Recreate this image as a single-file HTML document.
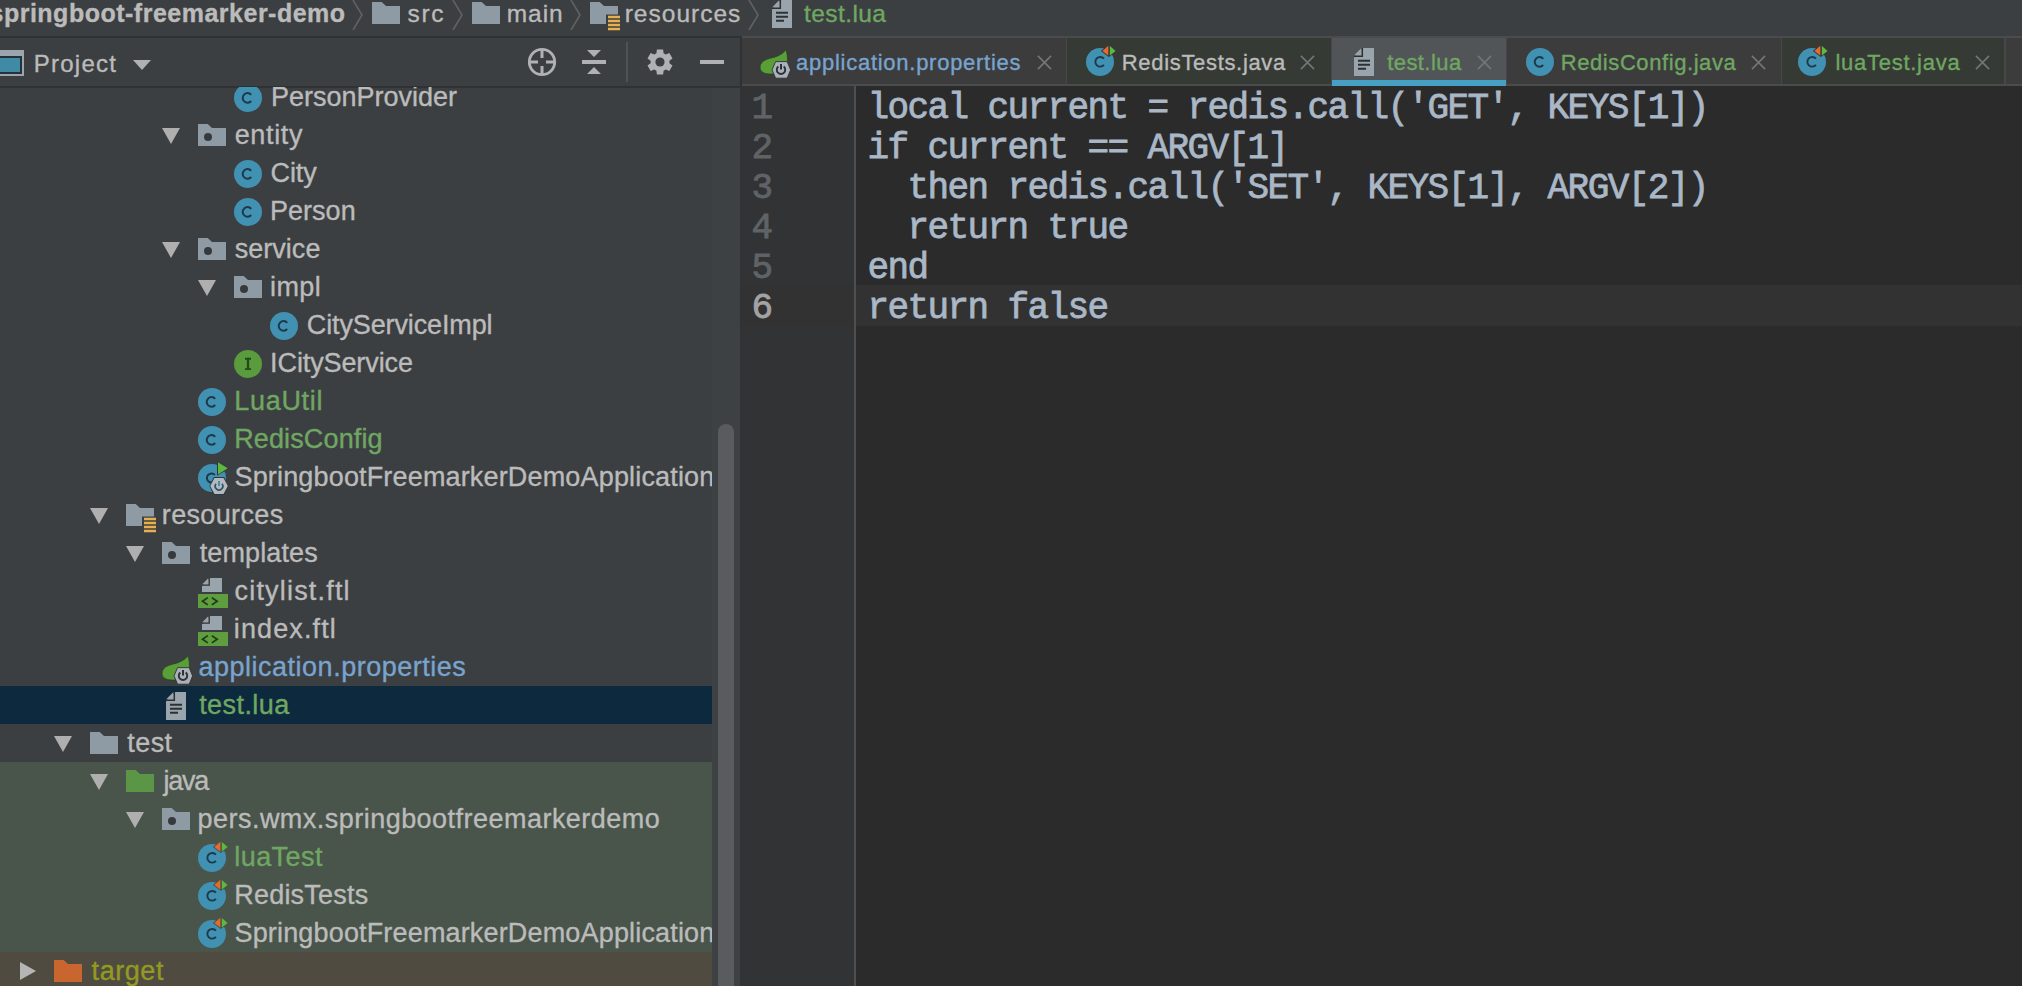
<!DOCTYPE html><html><head><meta charset="utf-8"><style>html,body{margin:0;padding:0;}body{width:2022px;height:986px;overflow:hidden;position:relative;background:#3C3F41;}div{-webkit-text-stroke:0.35px currentColor;}</style></head><body>

<svg width="0" height="0" style="position:absolute">
<defs>
 <symbol id="cls" viewBox="0 0 28 28">
  <circle cx="14" cy="14" r="14" fill="#4191B3"/>
  <path d="M17.18 10.81 A4.8 4.8 0 1 0 17.18 16.99" fill="none" stroke="#1D3A4B" stroke-width="2"/>
 </symbol>
 <symbol id="tcls" viewBox="0 0 31 31">
  <mask id="tmask" maskUnits="userSpaceOnUse" x="0" y="0" width="31" height="31"><rect x="0" y="0" width="31" height="31" fill="#fff"/><path d="M14.8 6 L23.1 -0.9 L23.1 12.2 Z M22.9 -0.8 L31.2 6 L22.9 12 Z" fill="#000"/></mask>
  <circle cx="14" cy="17" r="14" fill="#4191B3" mask="url(#tmask)"/>
  <path d="M17.92 13.68 A4.85 4.85 0 1 0 17.92 19.92" fill="none" stroke="#1D3A4B" stroke-width="1.9"/>
  <path d="M16.4 6 L22.3 0.8 L22.3 10.6 Z" fill="#E8692E"/>
  <path d="M23.9 1 L29.6 6 L23.9 10.4 Z" fill="#5DB83D"/>
 </symbol>
 <symbol id="icls" viewBox="0 0 28 28">
  <circle cx="14" cy="14" r="14" fill="#5A9B3E"/>
  <path d="M11 8.8 H17 M11 19.1 H17" fill="none" stroke="#22491A" stroke-width="1.9"/><path d="M14 8.8 V19.1" stroke="#22491A" stroke-width="2.3"/>
 </symbol>
 <symbol id="pkg" viewBox="0 0 28 22">
  <path d="M0 0 H9.7 L14 4 H28 V22 H0 Z" fill="#8E9BA5"/>
  <circle cx="10" cy="13" r="4" fill="#373A3C"/>
 </symbol>
 <symbol id="fold" viewBox="0 0 28 22">
  <path d="M0 0 H9.7 L14 4 H28 V22 H0 Z" fill="#8E9BA5"/>
 </symbol>
 <symbol id="foldg" viewBox="0 0 28 22">
  <path d="M0 0 H9.7 L14 4 H28 V22 H0 Z" fill="#5A9645"/>
 </symbol>
 <symbol id="foldo" viewBox="0 0 28 22">
  <path d="M0 0 H9.7 L14 4 H28 V22 H0 Z" fill="#C9652E"/>
 </symbol>
 <symbol id="resf" viewBox="0 0 32 30">
  <path d="M0 0 H9.7 L14 4 H28 V22 H0 Z" fill="#8E9BA5"/>
  <rect x="16" y="12.5" width="16" height="17.5" fill="#3C3F41"/>
  <path d="M18 15 H30 M18 19 H30 M18 23 H30 M18 27 H30" stroke="#E6B050" stroke-width="2.3"/>
 </symbol>
 <symbol id="doc" viewBox="0 0 20 28" preserveAspectRatio="none">
  <path d="M9.2 0 H20 V28 H0 V9.2 Z" fill="#9AA4AD"/>
  <path d="M7.4 0 V7.4 H0 Z" fill="#9AA4AD"/>
  <path d="M8.3 0 V8.3 H0" fill="none" stroke="#2E3133" stroke-width="1.5"/>
  <path d="M4 12.7 H16 M4 16.8 H16 M4 20.8 H12" stroke="#2E3133" stroke-width="2"/>
 </symbol>
 <symbol id="ftl" viewBox="0 0 30 31">
  <path d="M12 0 H24 V14 H4 V8 Z" fill="#9AA4AD"/>
  <path d="M10.5 0 V6.5 H4 Z" fill="#9AA4AD"/>
  <path d="M11.2 0 V7.2 H4" fill="none" stroke="#2E3133" stroke-width="1.3"/>
  <rect x="0" y="16" width="30" height="14" fill="#5E9E3E"/>
  <path d="M9.8 19.6 L4.5 23.2 L9.8 26.9 M13.8 19.6 L19.2 23.2 L13.8 26.9" fill="none" stroke="#1F3A14" stroke-width="1.7"/>
 </symbol>
 <symbol id="spring" viewBox="0 0 32 31">
  <path d="M26.8 1.8 C24 6 19 8 15.3 9.3 C10 10.5 5 11.5 2.5 15 C0 18.5 1 23 4 24.5 C7 26 10 26.2 17 26 L28.4 16 C28.6 9 28.2 5 26.8 1.8 Z" fill="#5A9E38" stroke="#24401A" stroke-width="0.7"/>
  <path d="M16.6 13.6 H28.2 L31.6 21.9 L28.2 30.2 H16.6 L13 21.9 Z" fill="#AAB1BA" stroke="#2E3133" stroke-width="0.9"/>
  <path d="M19.3 18.6 A4.2 4.2 0 1 0 24.7 18.6" fill="none" stroke="#2E3133" stroke-width="1.9"/>
  <path d="M22 16 V21.6" stroke="#2E3133" stroke-width="2"/>
 </symbol>
 <symbol id="app" viewBox="0 0 34 34">
  <circle cx="14" cy="16" r="14" fill="#4191B3"/>
  <path d="M16.9 12.9 A4.6 4.6 0 1 0 16.9 19.1" fill="none" stroke="#1D3A4B" stroke-width="2"/>
  <path d="M19 -1 L31.3 6.4 L19 13.8 Z" fill="#2C3A3E"/>
  <path d="M20 0.2 L29.8 6.3 L20 12.4 Z" fill="#5DB83D"/>
  <path d="M15.8 15 H26.2 L30.7 24 L26.2 33 H15.8 L11.3 24 Z" fill="#2C3A3E"/>
  <path d="M16.5 16 H25.5 L29.8 24 L25.5 32 H16.5 L12.2 24 Z" fill="#B4B9BF"/>
  <path d="M18.1 21.75 A3.8 3.8 0 1 0 23.9 21.75" fill="none" stroke="#2D5566" stroke-width="1.7"/>
  <path d="M21 19 V24" stroke="#3F8BA6" stroke-width="1.8"/>
 </symbol>
 <symbol id="xclose" viewBox="0 0 16 16">
  <path d="M1 1 L15 15 M15 1 L1 15" stroke="#737577" stroke-width="1.7"/>
 </symbol>
</defs>
</svg>

<div style="position:absolute;left:0px;top:0px;width:2022px;height:36px;background:#3C3F41;"></div>
<div style="position:absolute;left:0px;top:36px;width:742px;height:2px;background:#2F3133;"></div>
<div style="position:absolute;left:-10.50px;top:1.13px;font-family:'Liberation Sans', sans-serif;font-size:25px;line-height:25px;color:#BBBBBB;font-weight:bold;letter-spacing:0.500px;white-space:pre;">springboot-freemarker-demo</div>
<svg style="position:absolute;left:352px;top:0px;" width="11" height="30" viewBox="0 0 11 30"><path d="M1 0 L10 15 L1 30" fill="none" stroke="#5F6163" stroke-width="1.6"/></svg>
<svg style="position:absolute;left:452px;top:0px;" width="11" height="30" viewBox="0 0 11 30"><path d="M1 0 L10 15 L1 30" fill="none" stroke="#5F6163" stroke-width="1.6"/></svg>
<svg style="position:absolute;left:570px;top:0px;" width="11" height="30" viewBox="0 0 11 30"><path d="M1 0 L10 15 L1 30" fill="none" stroke="#5F6163" stroke-width="1.6"/></svg>
<svg style="position:absolute;left:748px;top:0px;" width="11" height="30" viewBox="0 0 11 30"><path d="M1 0 L10 15 L1 30" fill="none" stroke="#5F6163" stroke-width="1.6"/></svg>
<svg style="position:absolute;left:372px;top:2px;" width="28" height="22"><use href="#fold"/></svg>
<div style="position:absolute;left:407.60px;top:1.56px;font-family:'Liberation Sans', sans-serif;font-size:24.5px;line-height:24.5px;color:#BBBBBB;font-weight:normal;letter-spacing:1.600px;white-space:pre;">src</div>
<svg style="position:absolute;left:472px;top:2px;" width="28" height="22"><use href="#fold"/></svg>
<div style="position:absolute;left:506.80px;top:1.56px;font-family:'Liberation Sans', sans-serif;font-size:24.5px;line-height:24.5px;color:#BBBBBB;font-weight:normal;letter-spacing:0.900px;white-space:pre;">main</div>
<svg style="position:absolute;left:590px;top:2px;" width="32" height="30"><use href="#resf"/></svg>
<div style="position:absolute;left:624.70px;top:1.56px;font-family:'Liberation Sans', sans-serif;font-size:24.5px;line-height:24.5px;color:#BBBBBB;font-weight:normal;letter-spacing:1.012px;white-space:pre;">resources</div>
<svg style="position:absolute;left:772px;top:0px;" width="20" height="28"><use href="#doc"/></svg>
<div style="position:absolute;left:803.90px;top:1.56px;font-family:'Liberation Sans', sans-serif;font-size:24.5px;line-height:24.5px;color:#6FA762;font-weight:normal;letter-spacing:0.443px;white-space:pre;">test.lua</div>
<div style="position:absolute;left:0px;top:38px;width:740px;height:47px;background:#3C3F41;"></div>
<div style="position:absolute;left:0px;top:86px;width:740px;height:2px;background:#2F3133;"></div>
<svg style="position:absolute;left:0px;top:50px;" width="24" height="26" viewBox="0 0 24 26"><rect x="0" y="0" width="24" height="26" fill="#9AA5AE"/><rect x="0" y="6" width="22" height="18" fill="#263238"/><rect x="0" y="8" width="20" height="14" fill="#3F8BA6"/></svg>
<div style="position:absolute;left:33.80px;top:51.68px;font-family:'Liberation Sans', sans-serif;font-size:24px;line-height:24px;color:#BBBBBB;font-weight:normal;letter-spacing:1.233px;white-space:pre;">Project</div>
<svg style="position:absolute;left:133px;top:60px;" width="18" height="10" viewBox="0 0 18 10"><path d="M0 0 H18 L9 10 Z" fill="#AFB1B3"/></svg>
<svg style="position:absolute;left:527px;top:47px;" width="30" height="30" viewBox="0 0 30 30"><circle cx="15" cy="15" r="12.7" fill="none" stroke="#AFB1B3" stroke-width="2.8"/><path d="M15 2 V11 M15 19 V28 M2 15 H11 M19 15 H28" stroke="#AFB1B3" stroke-width="3"/></svg>
<svg style="position:absolute;left:581px;top:49px;" width="26" height="26" viewBox="0 0 26 26"><path d="M6 1 H20 L13 8 Z M6 25 H20 L13 18 Z" fill="#AFB1B3"/><rect x="1" y="11" width="24" height="4" fill="#AFB1B3"/></svg>
<div style="position:absolute;left:626px;top:42px;width:2px;height:40px;background:#505355;"></div>
<svg style="position:absolute;left:647px;top:49px;" width="26" height="26" viewBox="0 0 26 26"><path d="M9.86 0.39 L16.14 0.39 L16.56 4.19 L18.85 5.51 L22.35 3.97 L25.50 9.42 L22.41 11.68 L22.41 14.32 L25.50 16.58 L22.35 22.03 L18.85 20.49 L16.56 21.81 L16.14 25.61 L9.86 25.61 L9.44 21.81 L7.15 20.49 L3.65 22.03 L0.50 16.58 L3.59 14.32 L3.59 11.68 L0.50 9.42 L3.65 3.97 L7.15 5.51 L9.44 4.19 Z" fill="#AFB1B3"/><circle cx="13" cy="13" r="4.6" fill="#3C3F41"/></svg>
<div style="position:absolute;left:700px;top:60px;width:24px;height:4px;background:#AFB1B3;"></div>
<div style="position:absolute;left:740px;top:36px;width:2px;height:50px;background:#2F3133;"></div>
<div style="position:absolute;left:0;top:87px;width:712px;height:899px;overflow:hidden;">
<svg style="position:absolute;left:234px;top:-3px;" width="28" height="28"><use href="#cls"/></svg>
<div style="position:absolute;left:271.10px;top:-2.86px;font-family:'Liberation Sans', sans-serif;font-size:27px;line-height:27px;color:#BBBBBB;font-weight:normal;letter-spacing:-0.015px;white-space:pre;">PersonProvider</div>
<svg style="position:absolute;left:162px;top:41px;" width="18" height="16" viewBox="0 0 18 16"><path d="M0 0 H18 L9 16 Z" fill="#AFAFAF"/></svg>
<svg style="position:absolute;left:198px;top:37px;" width="28" height="22"><use href="#pkg"/></svg>
<div style="position:absolute;left:234.70px;top:35.14px;font-family:'Liberation Sans', sans-serif;font-size:27px;line-height:27px;color:#BBBBBB;font-weight:normal;letter-spacing:0.660px;white-space:pre;">entity</div>
<svg style="position:absolute;left:234px;top:73px;" width="28" height="28"><use href="#cls"/></svg>
<div style="position:absolute;left:270.60px;top:73.14px;font-family:'Liberation Sans', sans-serif;font-size:27px;line-height:27px;color:#BBBBBB;font-weight:normal;letter-spacing:-0.133px;white-space:pre;">City</div>
<svg style="position:absolute;left:234px;top:111px;" width="28" height="28"><use href="#cls"/></svg>
<div style="position:absolute;left:270.00px;top:111.14px;font-family:'Liberation Sans', sans-serif;font-size:27px;line-height:27px;color:#BBBBBB;font-weight:normal;letter-spacing:0.020px;white-space:pre;">Person</div>
<svg style="position:absolute;left:162px;top:155px;" width="18" height="16" viewBox="0 0 18 16"><path d="M0 0 H18 L9 16 Z" fill="#AFAFAF"/></svg>
<svg style="position:absolute;left:198px;top:151px;" width="28" height="22"><use href="#pkg"/></svg>
<div style="position:absolute;left:234.70px;top:149.14px;font-family:'Liberation Sans', sans-serif;font-size:27px;line-height:27px;color:#BBBBBB;font-weight:normal;letter-spacing:0.033px;white-space:pre;">service</div>
<svg style="position:absolute;left:198px;top:193px;" width="18" height="16" viewBox="0 0 18 16"><path d="M0 0 H18 L9 16 Z" fill="#AFAFAF"/></svg>
<svg style="position:absolute;left:234px;top:189px;" width="28" height="22"><use href="#pkg"/></svg>
<div style="position:absolute;left:270.00px;top:187.14px;font-family:'Liberation Sans', sans-serif;font-size:27px;line-height:27px;color:#BBBBBB;font-weight:normal;letter-spacing:0.400px;white-space:pre;">impl</div>
<svg style="position:absolute;left:270px;top:225px;" width="28" height="28"><use href="#cls"/></svg>
<div style="position:absolute;left:306.80px;top:225.14px;font-family:'Liberation Sans', sans-serif;font-size:27px;line-height:27px;color:#BBBBBB;font-weight:normal;letter-spacing:-0.129px;white-space:pre;">CityServiceImpl</div>
<svg style="position:absolute;left:234px;top:263px;" width="28" height="28"><use href="#icls"/></svg>
<div style="position:absolute;left:270.10px;top:263.14px;font-family:'Liberation Sans', sans-serif;font-size:27px;line-height:27px;color:#BBBBBB;font-weight:normal;letter-spacing:-0.109px;white-space:pre;">ICityService</div>
<svg style="position:absolute;left:198px;top:301px;" width="28" height="28"><use href="#cls"/></svg>
<div style="position:absolute;left:234.20px;top:301.14px;font-family:'Liberation Sans', sans-serif;font-size:27px;line-height:27px;color:#6FA762;font-weight:normal;letter-spacing:0.717px;white-space:pre;">LuaUtil</div>
<svg style="position:absolute;left:198px;top:339px;" width="28" height="28"><use href="#cls"/></svg>
<div style="position:absolute;left:234.20px;top:339.14px;font-family:'Liberation Sans', sans-serif;font-size:27px;line-height:27px;color:#6FA762;font-weight:normal;letter-spacing:0.130px;white-space:pre;">RedisConfig</div>
<svg style="position:absolute;left:198px;top:375px;" width="34" height="34"><use href="#app"/></svg>
<div style="position:absolute;left:234.50px;top:377.14px;font-family:'Liberation Sans', sans-serif;font-size:27px;line-height:27px;color:#BBBBBB;font-weight:normal;letter-spacing:0.162px;white-space:pre;">SpringbootFreemarkerDemoApplication</div>
<svg style="position:absolute;left:90px;top:421px;" width="18" height="16" viewBox="0 0 18 16"><path d="M0 0 H18 L9 16 Z" fill="#AFAFAF"/></svg>
<svg style="position:absolute;left:126px;top:417px;" width="32" height="30"><use href="#resf"/></svg>
<div style="position:absolute;left:161.80px;top:415.14px;font-family:'Liberation Sans', sans-serif;font-size:27px;line-height:27px;color:#BBBBBB;font-weight:normal;letter-spacing:0.350px;white-space:pre;">resources</div>
<svg style="position:absolute;left:126px;top:459px;" width="18" height="16" viewBox="0 0 18 16"><path d="M0 0 H18 L9 16 Z" fill="#AFAFAF"/></svg>
<svg style="position:absolute;left:162px;top:455px;" width="28" height="22"><use href="#pkg"/></svg>
<div style="position:absolute;left:199.70px;top:453.14px;font-family:'Liberation Sans', sans-serif;font-size:27px;line-height:27px;color:#BBBBBB;font-weight:normal;letter-spacing:0.125px;white-space:pre;">templates</div>
<svg style="position:absolute;left:198px;top:491px;" width="30" height="31"><use href="#ftl"/></svg>
<div style="position:absolute;left:234.50px;top:491.14px;font-family:'Liberation Sans', sans-serif;font-size:27px;line-height:27px;color:#BBBBBB;font-weight:normal;letter-spacing:1.191px;white-space:pre;">citylist.ftl</div>
<svg style="position:absolute;left:198px;top:529px;" width="30" height="31"><use href="#ftl"/></svg>
<div style="position:absolute;left:233.80px;top:529.14px;font-family:'Liberation Sans', sans-serif;font-size:27px;line-height:27px;color:#BBBBBB;font-weight:normal;letter-spacing:1.112px;white-space:pre;">index.ftl</div>
<svg style="position:absolute;left:161px;top:567px;" width="32" height="31"><use href="#spring"/></svg>
<div style="position:absolute;left:198.40px;top:567.14px;font-family:'Liberation Sans', sans-serif;font-size:27px;line-height:27px;color:#78A4CE;font-weight:normal;letter-spacing:0.514px;white-space:pre;">application.properties</div>
<div style="position:absolute;left:0px;top:599px;width:712px;height:38px;background:#0D293E;"></div>
<svg style="position:absolute;left:166px;top:605px;" width="20" height="28"><use href="#doc"/></svg>
<div style="position:absolute;left:199.20px;top:605.14px;font-family:'Liberation Sans', sans-serif;font-size:27px;line-height:27px;color:#6FA762;font-weight:normal;letter-spacing:0.429px;white-space:pre;">test.lua</div>
<svg style="position:absolute;left:54px;top:649px;" width="18" height="16" viewBox="0 0 18 16"><path d="M0 0 H18 L9 16 Z" fill="#AFAFAF"/></svg>
<svg style="position:absolute;left:90px;top:645px;" width="28" height="22"><use href="#fold"/></svg>
<div style="position:absolute;left:127.20px;top:643.14px;font-family:'Liberation Sans', sans-serif;font-size:27px;line-height:27px;color:#BBBBBB;font-weight:normal;letter-spacing:0.467px;white-space:pre;">test</div>
<div style="position:absolute;left:0px;top:675px;width:712px;height:38px;background:#49544A;"></div>
<svg style="position:absolute;left:90px;top:687px;" width="18" height="16" viewBox="0 0 18 16"><path d="M0 0 H18 L9 16 Z" fill="#AFAFAF"/></svg>
<svg style="position:absolute;left:126px;top:683px;" width="28" height="22"><use href="#foldg"/></svg>
<div style="position:absolute;left:163.50px;top:681.14px;font-family:'Liberation Sans', sans-serif;font-size:27px;line-height:27px;color:#BBBBBB;font-weight:normal;letter-spacing:-1.267px;white-space:pre;">java</div>
<div style="position:absolute;left:0px;top:713px;width:712px;height:38px;background:#49544A;"></div>
<svg style="position:absolute;left:126px;top:725px;" width="18" height="16" viewBox="0 0 18 16"><path d="M0 0 H18 L9 16 Z" fill="#AFAFAF"/></svg>
<svg style="position:absolute;left:162px;top:721px;" width="28" height="22"><use href="#pkg"/></svg>
<div style="position:absolute;left:197.50px;top:719.14px;font-family:'Liberation Sans', sans-serif;font-size:27px;line-height:27px;color:#BBBBBB;font-weight:normal;letter-spacing:0.472px;white-space:pre;">pers.wmx.springbootfreemarkerdemo</div>
<div style="position:absolute;left:0px;top:751px;width:712px;height:38px;background:#49544A;"></div>
<svg style="position:absolute;left:198px;top:754px;" width="31" height="31"><use href="#tcls"/></svg>
<div style="position:absolute;left:234.20px;top:757.14px;font-family:'Liberation Sans', sans-serif;font-size:27px;line-height:27px;color:#6FA762;font-weight:normal;letter-spacing:0.467px;white-space:pre;">luaTest</div>
<div style="position:absolute;left:0px;top:789px;width:712px;height:38px;background:#49544A;"></div>
<svg style="position:absolute;left:198px;top:792px;" width="31" height="31"><use href="#tcls"/></svg>
<div style="position:absolute;left:234.20px;top:795.14px;font-family:'Liberation Sans', sans-serif;font-size:27px;line-height:27px;color:#BBBBBB;font-weight:normal;letter-spacing:0.222px;white-space:pre;">RedisTests</div>
<div style="position:absolute;left:0px;top:827px;width:712px;height:38px;background:#49544A;"></div>
<svg style="position:absolute;left:198px;top:830px;" width="31" height="31"><use href="#tcls"/></svg>
<div style="position:absolute;left:234.50px;top:833.14px;font-family:'Liberation Sans', sans-serif;font-size:27px;line-height:27px;color:#BBBBBB;font-weight:normal;letter-spacing:0.162px;white-space:pre;">SpringbootFreemarkerDemoApplication</div>
<div style="position:absolute;left:0px;top:865px;width:712px;height:38px;background:#4F4B41;"></div>
<svg style="position:absolute;left:20px;top:875px;" width="16" height="18" viewBox="0 0 16 18"><path d="M0 0 V18 L16 9 Z" fill="#B5B5B5"/></svg>
<svg style="position:absolute;left:54px;top:873px;" width="28" height="22"><use href="#foldo"/></svg>
<div style="position:absolute;left:91.60px;top:871.14px;font-family:'Liberation Sans', sans-serif;font-size:27px;line-height:27px;color:#939A22;font-weight:normal;letter-spacing:0.560px;white-space:pre;">target</div>
</div>
<div style="position:absolute;left:712px;top:88px;width:28px;height:898px;background:#3E4144;"></div>
<div style="position:absolute;left:718px;top:424px;width:16px;height:580px;background:#595B5D;border-radius:8px;"></div>
<div style="position:absolute;left:742px;top:36px;width:1280px;height:2px;background:#4A4B4D;"></div>
<div style="position:absolute;left:742px;top:38px;width:1280px;height:46px;background:#3C3C3D;"></div>
<div style="position:absolute;left:742px;top:84px;width:1280px;height:2px;background:#4A4B4D;"></div>
<div style="position:absolute;left:742px;top:38px;width:324px;height:46px;background:#3C3C3D;"></div>
<div style="position:absolute;left:1066px;top:38px;width:2px;height:46px;background:#464749;"></div>
<svg style="position:absolute;left:759px;top:48px;" width="32" height="31"><use href="#spring"/></svg>
<div style="position:absolute;left:796.10px;top:51.97px;font-family:'Liberation Sans', sans-serif;font-size:22px;line-height:22px;color:#78A4CE;font-weight:normal;letter-spacing:0.729px;white-space:pre;">application.properties</div>
<svg style="position:absolute;left:1037px;top:55px;" width="15" height="15"><use href="#xclose"/></svg>
<div style="position:absolute;left:1067px;top:38px;width:264px;height:46px;background:#363A35;"></div>
<div style="position:absolute;left:1331px;top:38px;width:2px;height:46px;background:#464749;"></div>
<svg style="position:absolute;left:1085.5px;top:45px;" width="31" height="31"><use href="#tcls"/></svg>
<div style="position:absolute;left:1121.80px;top:51.97px;font-family:'Liberation Sans', sans-serif;font-size:22px;line-height:22px;color:#BBBBBB;font-weight:normal;letter-spacing:0.671px;white-space:pre;">RedisTests.java</div>
<svg style="position:absolute;left:1300px;top:55px;" width="15" height="15"><use href="#xclose"/></svg>
<div style="position:absolute;left:1332px;top:38px;width:174px;height:46px;background:#515557;"></div>
<div style="position:absolute;left:1506px;top:38px;width:2px;height:46px;background:#464749;"></div>
<svg style="position:absolute;left:1354px;top:48px;" width="20" height="28"><use href="#doc"/></svg>
<div style="position:absolute;left:1387.20px;top:51.97px;font-family:'Liberation Sans', sans-serif;font-size:22px;line-height:22px;color:#6FA762;font-weight:normal;letter-spacing:0.429px;white-space:pre;">test.lua</div>
<svg style="position:absolute;left:1477px;top:55px;" width="15" height="15"><use href="#xclose"/></svg>
<div style="position:absolute;left:1507px;top:38px;width:274px;height:46px;background:#3C3C3D;"></div>
<div style="position:absolute;left:1781px;top:38px;width:2px;height:46px;background:#464749;"></div>
<svg style="position:absolute;left:1526px;top:48px;" width="28" height="28"><use href="#cls"/></svg>
<div style="position:absolute;left:1560.80px;top:51.97px;font-family:'Liberation Sans', sans-serif;font-size:22px;line-height:22px;color:#6FA762;font-weight:normal;letter-spacing:0.573px;white-space:pre;">RedisConfig.java</div>
<svg style="position:absolute;left:1750.5px;top:55px;" width="15" height="15"><use href="#xclose"/></svg>
<div style="position:absolute;left:1782px;top:38px;width:222px;height:46px;background:#363A35;"></div>
<div style="position:absolute;left:2004px;top:38px;width:2px;height:46px;background:#464749;"></div>
<svg style="position:absolute;left:1798.1px;top:45px;" width="31" height="31"><use href="#tcls"/></svg>
<div style="position:absolute;left:1835.40px;top:51.97px;font-family:'Liberation Sans', sans-serif;font-size:22px;line-height:22px;color:#6FA762;font-weight:normal;letter-spacing:0.736px;white-space:pre;">luaTest.java</div>
<svg style="position:absolute;left:1975px;top:55px;" width="15" height="15"><use href="#xclose"/></svg>
<div style="position:absolute;left:1332px;top:80px;width:174px;height:6px;background:#46A0C4;"></div>
<div style="position:absolute;left:740px;top:86px;width:114px;height:900px;background:#313335;"></div>
<div style="position:absolute;left:854px;top:86px;width:2px;height:900px;background:#4D4F51;"></div>
<div style="position:absolute;left:856px;top:86px;width:1166px;height:900px;background:#2B2B2B;"></div>
<div style="position:absolute;left:740px;top:285px;width:114px;height:41px;background:#323233;"></div>
<div style="position:absolute;left:856px;top:285px;width:1166px;height:41px;background:#323232;"></div>
<div style="position:absolute;left:751.60px;top:91.12px;font-family:'Liberation Mono', monospace;font-size:36px;line-height:36px;color:#606366;font-weight:normal;letter-spacing:-1.600px;white-space:pre;-webkit-text-stroke:0.8px #606366;">1</div>
<div style="position:absolute;left:867.50px;top:91.12px;font-family:'Liberation Mono', monospace;font-size:36px;line-height:36px;color:#A9B7C6;font-weight:normal;letter-spacing:-1.600px;white-space:pre;-webkit-text-stroke:0.8px #A9B7C6;">local current = redis.call('GET', KEYS[1])</div>
<div style="position:absolute;left:751.60px;top:131.12px;font-family:'Liberation Mono', monospace;font-size:36px;line-height:36px;color:#606366;font-weight:normal;letter-spacing:-1.600px;white-space:pre;-webkit-text-stroke:0.8px #606366;">2</div>
<div style="position:absolute;left:867.50px;top:131.12px;font-family:'Liberation Mono', monospace;font-size:36px;line-height:36px;color:#A9B7C6;font-weight:normal;letter-spacing:-1.600px;white-space:pre;-webkit-text-stroke:0.8px #A9B7C6;">if current == ARGV[1]</div>
<div style="position:absolute;left:751.60px;top:171.12px;font-family:'Liberation Mono', monospace;font-size:36px;line-height:36px;color:#606366;font-weight:normal;letter-spacing:-1.600px;white-space:pre;-webkit-text-stroke:0.8px #606366;">3</div>
<div style="position:absolute;left:867.50px;top:171.12px;font-family:'Liberation Mono', monospace;font-size:36px;line-height:36px;color:#A9B7C6;font-weight:normal;letter-spacing:-1.600px;white-space:pre;-webkit-text-stroke:0.8px #A9B7C6;">  then redis.call('SET', KEYS[1], ARGV[2])</div>
<div style="position:absolute;left:751.60px;top:211.12px;font-family:'Liberation Mono', monospace;font-size:36px;line-height:36px;color:#606366;font-weight:normal;letter-spacing:-1.600px;white-space:pre;-webkit-text-stroke:0.8px #606366;">4</div>
<div style="position:absolute;left:867.50px;top:211.12px;font-family:'Liberation Mono', monospace;font-size:36px;line-height:36px;color:#A9B7C6;font-weight:normal;letter-spacing:-1.600px;white-space:pre;-webkit-text-stroke:0.8px #A9B7C6;">  return true</div>
<div style="position:absolute;left:751.60px;top:251.12px;font-family:'Liberation Mono', monospace;font-size:36px;line-height:36px;color:#606366;font-weight:normal;letter-spacing:-1.600px;white-space:pre;-webkit-text-stroke:0.8px #606366;">5</div>
<div style="position:absolute;left:867.50px;top:251.12px;font-family:'Liberation Mono', monospace;font-size:36px;line-height:36px;color:#A9B7C6;font-weight:normal;letter-spacing:-1.600px;white-space:pre;-webkit-text-stroke:0.8px #A9B7C6;">end</div>
<div style="position:absolute;left:751.60px;top:291.12px;font-family:'Liberation Mono', monospace;font-size:36px;line-height:36px;color:#A4A3A3;font-weight:normal;letter-spacing:-1.600px;white-space:pre;-webkit-text-stroke:0.8px #A4A3A3;">6</div>
<div style="position:absolute;left:867.50px;top:291.12px;font-family:'Liberation Mono', monospace;font-size:36px;line-height:36px;color:#A9B7C6;font-weight:normal;letter-spacing:-1.600px;white-space:pre;-webkit-text-stroke:0.8px #A9B7C6;">return false</div>
</body></html>
